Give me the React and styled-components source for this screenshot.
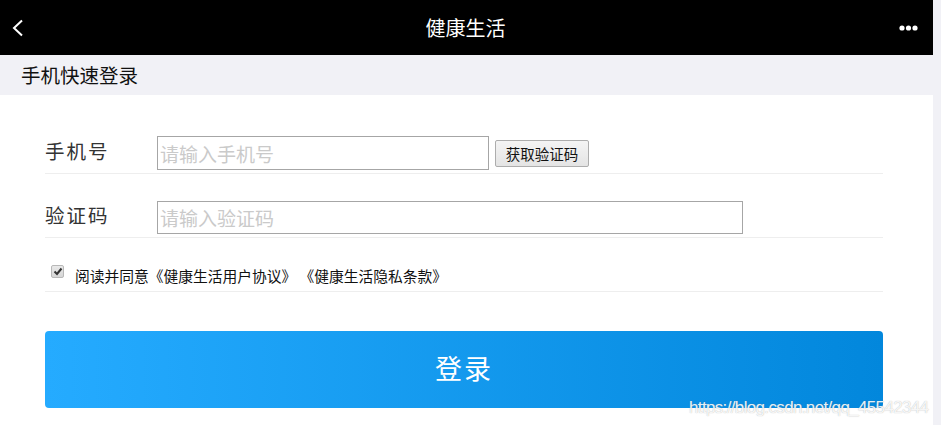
import React from "react";
import styled, { createGlobalStyle } from "styled-components";

const GlobalStyle = createGlobalStyle`
  html, body { margin: 0; padding: 0; }
  body {
    background: #f1f1f6;
    font-family: "Noto Sans CJK SC", "Noto Sans", "Liberation Sans", sans-serif;
  }
  * { box-sizing: border-box; }
`;

const Page = styled.div`
  width: 933px;
  min-height: 425px;
  position: relative;
  display: flex;
  flex-direction: column;
`;

const NavBar = styled.header`
  height: 55px;
  background: #000;
  display: flex;
  align-items: center;
  justify-content: space-between;
  padding: 0 14px 0 12px;
  color: #fff;
`;

const NavTitle = styled.h1`
  margin: 0;
  font-size: 20px;
  font-weight: 400;
  line-height: 55px;
  color: #fff;
`;

const NavButton = styled.span`
  display: flex;
  align-items: center;
  width: 20px;
  justify-content: ${(p) => (p.$right ? "flex-end" : "flex-start")};
`;

const SectionTitle = styled.div`
  height: 40px;
  line-height: 40px;
  padding-left: 21px;
  font-size: 19.5px;
  color: #111;
  background: #f1f1f6;
`;

const Form = styled.div`
  flex: 1;
  background: #fff;
  padding: 14px 50px 20px 45px;
`;

const Row = styled.div`
  display: flex;
  align-items: center;
  padding: ${(p) => p.$pad || "27px 0 3px"};
  border-bottom: 1px solid #eeeeee;
`;

const Label = styled.label`
  width: 112px;
  flex-shrink: 0;
  font-size: 19.5px;
  line-height: 24px;
  padding-bottom: 5px;
  letter-spacing: 2px;
  color: #333;
`;

const TextInput = styled.input`
  width: ${(p) => p.$w}px;
  height: ${(p) => p.$h || 34}px;
  border: 1px solid #a6a6a6;
  padding: 0 2px;
  font-size: 19px;
  font-family: inherit;
  color: #333;
  outline: none;
  &::placeholder { color: #cacaca; }
`;

const CodeButton = styled.button`
  margin-left: 6px;
  width: 94px;
  height: 27px;
  padding: 0;
  font-size: 14.5px;
  font-family: inherit;
  color: #111;
  border: 1px solid #adadad;
  border-radius: 2px;
  background: linear-gradient(#f4f4f4, #e4e4e4);
`;

const CheckBox = styled.span`
  width: 13px;
  height: 13px;
  margin: 0 11px 0 6px;
  border: 1px solid #b8b8b8;
  border-radius: 2px;
  background: linear-gradient(#e9e9e9, #d6d6d6);
  display: flex;
  align-items: center;
  justify-content: center;
  flex-shrink: 0;
  align-self: flex-start;
  margin-top: 1px;
`;

const AgreeText = styled.span`
  font-size: 14.75px;
  line-height: 20px;
  color: #111;
  margin-top: 2px;
  white-space: pre;
`;

const LoginButton = styled.button`
  margin-top: 39px;
  width: 100%;
  height: 77px;
  border: none;
  border-radius: 4px;
  background: linear-gradient(to right, #25abff, #0287dc);
  color: #fff;
  font-size: 27px;
  font-family: inherit;
  letter-spacing: 2px;
  padding: 0 0 5px;
`;

const Watermark = styled.div`
  position: absolute;
  left: 689px;
  top: 398px;
  font-family: "Liberation Sans", Arial, sans-serif;
  font-size: 17px;
  letter-spacing: -0.65px;
  color: rgba(255, 255, 255, 0.9);
  text-shadow: 0 0 1px rgba(120, 120, 120, 0.6);
  white-space: nowrap;
`;

export default function App() {
  return (
    <>
      <GlobalStyle />
      <Page>
        <NavBar>
          <NavButton>
            <svg width="12" height="18" viewBox="0 0 12 18">
              <polyline points="10,1.5 2,9 10,16.5" fill="none" stroke="#fff" strokeWidth="2" />
            </svg>
          </NavButton>
          <NavTitle>健康生活</NavTitle>
          <NavButton $right>
            <svg width="20" height="6" viewBox="0 0 20 6">
              <circle cx="3" cy="3" r="2.6" fill="#fff" />
              <circle cx="9.5" cy="3" r="2.6" fill="#fff" />
              <circle cx="16" cy="3" r="2.6" fill="#fff" />
            </svg>
          </NavButton>
        </NavBar>
        <SectionTitle>手机快速登录</SectionTitle>
        <Form>
          <Row>
            <Label>手机号</Label>
            <TextInput $w={332} placeholder="请输入手机号" />
            <CodeButton>获取验证码</CodeButton>
          </Row>
          <Row>
            <Label>验证码</Label>
            <TextInput $w={586} $h={33} placeholder="请输入验证码" />
          </Row>
          <Row $pad="26px 0 5px">
            <CheckBox>
              <svg width="10" height="9" viewBox="0 0 10 9">
                <polyline points="1.5,4.5 4,7 8.5,1.5" fill="none" stroke="#333" strokeWidth="2" />
              </svg>
            </CheckBox>
            <AgreeText>阅读并同意《健康生活用户协议》 《健康生活隐私条款》</AgreeText>
          </Row>
          <LoginButton>登录</LoginButton>
        </Form>
        <Watermark>https://blog.csdn.net/qq_45542344</Watermark>
      </Page>
    </>
  );
}
